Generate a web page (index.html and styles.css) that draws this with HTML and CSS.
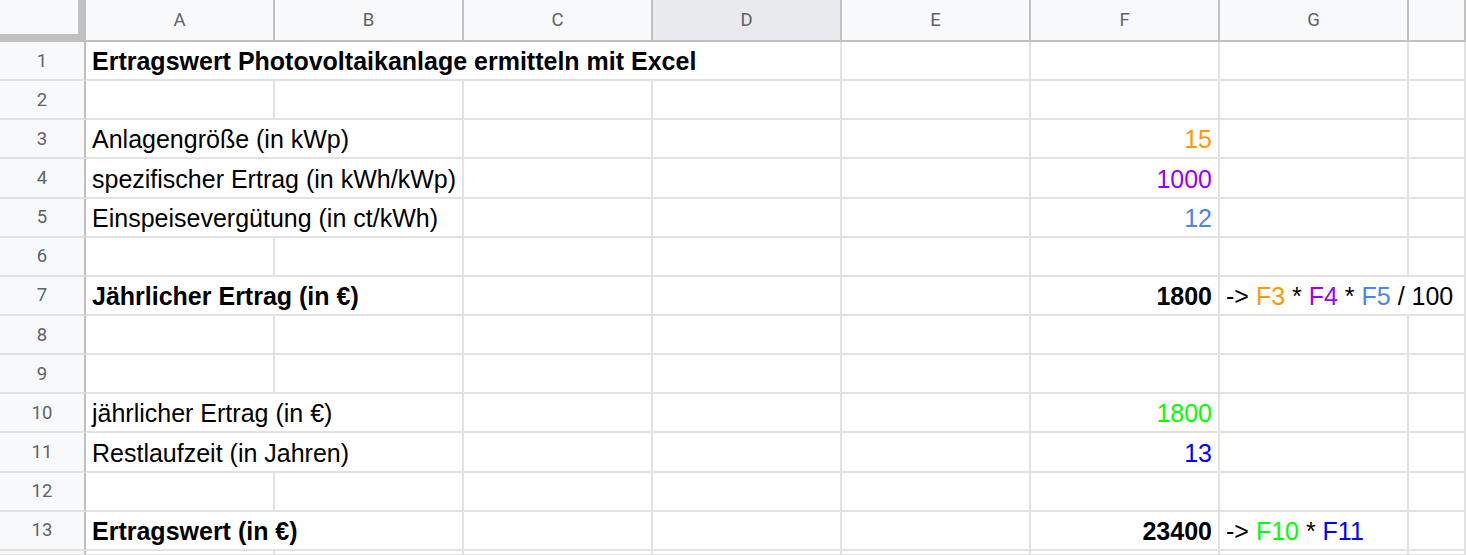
FILE: index.html
```html
<!DOCTYPE html>
<html lang="de">
<head>
<meta charset="utf-8">
<title>Ertragswert Photovoltaikanlage</title>
<link rel="stylesheet" href="styles.css">
</head>
<body>
<div class="sheet">
  <div class="corner"></div>
  <div class="ch">A</div><div class="ch">B</div><div class="ch">C</div><div class="ch sel">D</div><div class="ch">E</div><div class="ch">F</div><div class="ch">G</div><div class="ch"></div>

  <div class="rh">1</div>
  <div class="c span4 b">Ertragswert Photovoltaikanlage ermitteln mit Excel</div><div class="c"></div><div class="c"></div><div class="c"></div><div class="c"></div>

  <div class="rh">2</div>
  <div class="c"></div><div class="c"></div><div class="c"></div><div class="c"></div><div class="c"></div><div class="c"></div><div class="c"></div><div class="c"></div>

  <div class="rh">3</div>
  <div class="c span2">Anlagengröße (in kWp)</div><div class="c"></div><div class="c"></div><div class="c"></div><div class="c num orange">15</div><div class="c"></div><div class="c"></div>

  <div class="rh">4</div>
  <div class="c span2">spezifischer Ertrag (in kWh/kWp)</div><div class="c"></div><div class="c"></div><div class="c"></div><div class="c num purple">1000</div><div class="c"></div><div class="c"></div>

  <div class="rh">5</div>
  <div class="c span2">Einspeisevergütung (in ct/kWh)</div><div class="c"></div><div class="c"></div><div class="c"></div><div class="c num lblue">12</div><div class="c"></div><div class="c"></div>

  <div class="rh">6</div>
  <div class="c"></div><div class="c"></div><div class="c"></div><div class="c"></div><div class="c"></div><div class="c"></div><div class="c"></div><div class="c"></div>

  <div class="rh">7</div>
  <div class="c span2 b">Jährlicher Ertrag (in €)</div><div class="c"></div><div class="c"></div><div class="c"></div><div class="c num b">1800</div><div class="c span2">-&gt;&nbsp;<span class="orange">F3</span>&nbsp;*&nbsp;<span class="purple">F4</span>&nbsp;*&nbsp;<span class="lblue">F5</span>&nbsp;/ 100</div>

  <div class="rh">8</div>
  <div class="c"></div><div class="c"></div><div class="c"></div><div class="c"></div><div class="c"></div><div class="c"></div><div class="c"></div><div class="c"></div>

  <div class="rh">9</div>
  <div class="c"></div><div class="c"></div><div class="c"></div><div class="c"></div><div class="c"></div><div class="c"></div><div class="c"></div><div class="c"></div>

  <div class="rh">10</div>
  <div class="c span2">jährlicher Ertrag (in €)</div><div class="c"></div><div class="c"></div><div class="c"></div><div class="c num green">1800</div><div class="c"></div><div class="c"></div>

  <div class="rh">11</div>
  <div class="c span2">Restlaufzeit (in Jahren)</div><div class="c"></div><div class="c"></div><div class="c"></div><div class="c num blue">13</div><div class="c"></div><div class="c"></div>

  <div class="rh">12</div>
  <div class="c"></div><div class="c"></div><div class="c"></div><div class="c"></div><div class="c"></div><div class="c"></div><div class="c"></div><div class="c"></div>

  <div class="rh">13</div>
  <div class="c span2 b">Ertragswert (in €)</div><div class="c"></div><div class="c"></div><div class="c"></div><div class="c num b">23400</div><div class="c">-&gt;&nbsp;<span class="green">F10</span>&nbsp;*&nbsp;<span class="blue">F11</span></div><div class="c"></div>

  <div class="rh"></div>
  <div class="c"></div><div class="c"></div><div class="c"></div><div class="c"></div><div class="c"></div><div class="c"></div><div class="c"></div><div class="c"></div>
</div>
</body>
</html>
```

FILE: styles.css
```css
html, body {
  margin: 0;
  padding: 0;
  background: #ffffff;
  overflow: hidden;
}

.sheet {
  display: grid;
  grid-template-columns: 86px repeat(7, 189px) 1fr;
  grid-template-rows: 42px repeat(13, 39.15px) 1fr;
  width: 1466px;
  height: 555px;
  overflow: hidden;
}

.corner {
  box-sizing: border-box;
  background: #f8f9fa;
  border-right: 8px solid #c0c0c0;
  border-bottom: 8px solid #c0c0c0;
}

.ch {
  box-sizing: border-box;
  background: #f8f9fa;
  border-right: 2px solid #c0c0c0;
  border-bottom: 2px solid #c0c0c0;
  display: flex;
  align-items: center;
  justify-content: center;
  font-family: Roboto, "Liberation Sans", sans-serif;
  font-size: 18.5px;
  color: #5f6368;
}

.ch.sel {
  background: #e8eaed;
}

.rh {
  box-sizing: border-box;
  background: #f8f9fa;
  border-right: 2px solid #c0c0c0;
  border-bottom: 2px solid #e2e2e2;
  display: flex;
  align-items: center;
  justify-content: center;
  font-family: Roboto, "Liberation Sans", sans-serif;
  font-size: 18.5px;
  color: #5f6368;
}

.c {
  box-sizing: border-box;
  border-right: 2px solid #e2e2e2;
  border-bottom: 2px solid #e2e2e2;
  display: flex;
  align-items: flex-end;
  padding: 0 6px 3px 6px;
  font-family: "Liberation Sans", Arial, sans-serif;
  font-size: 25px;
  color: #000000;
  white-space: nowrap;
  overflow: hidden;
}

.span2 { grid-column: span 2; }
.span4 { grid-column: span 4; }

.num { justify-content: flex-end; }
.b { font-weight: bold; }

.orange { color: #ff9900; }
.purple { color: #9900ff; }
.lblue { color: #4a86e8; }
.green { color: #00ff00; }
.blue { color: #0000ff; }
```
